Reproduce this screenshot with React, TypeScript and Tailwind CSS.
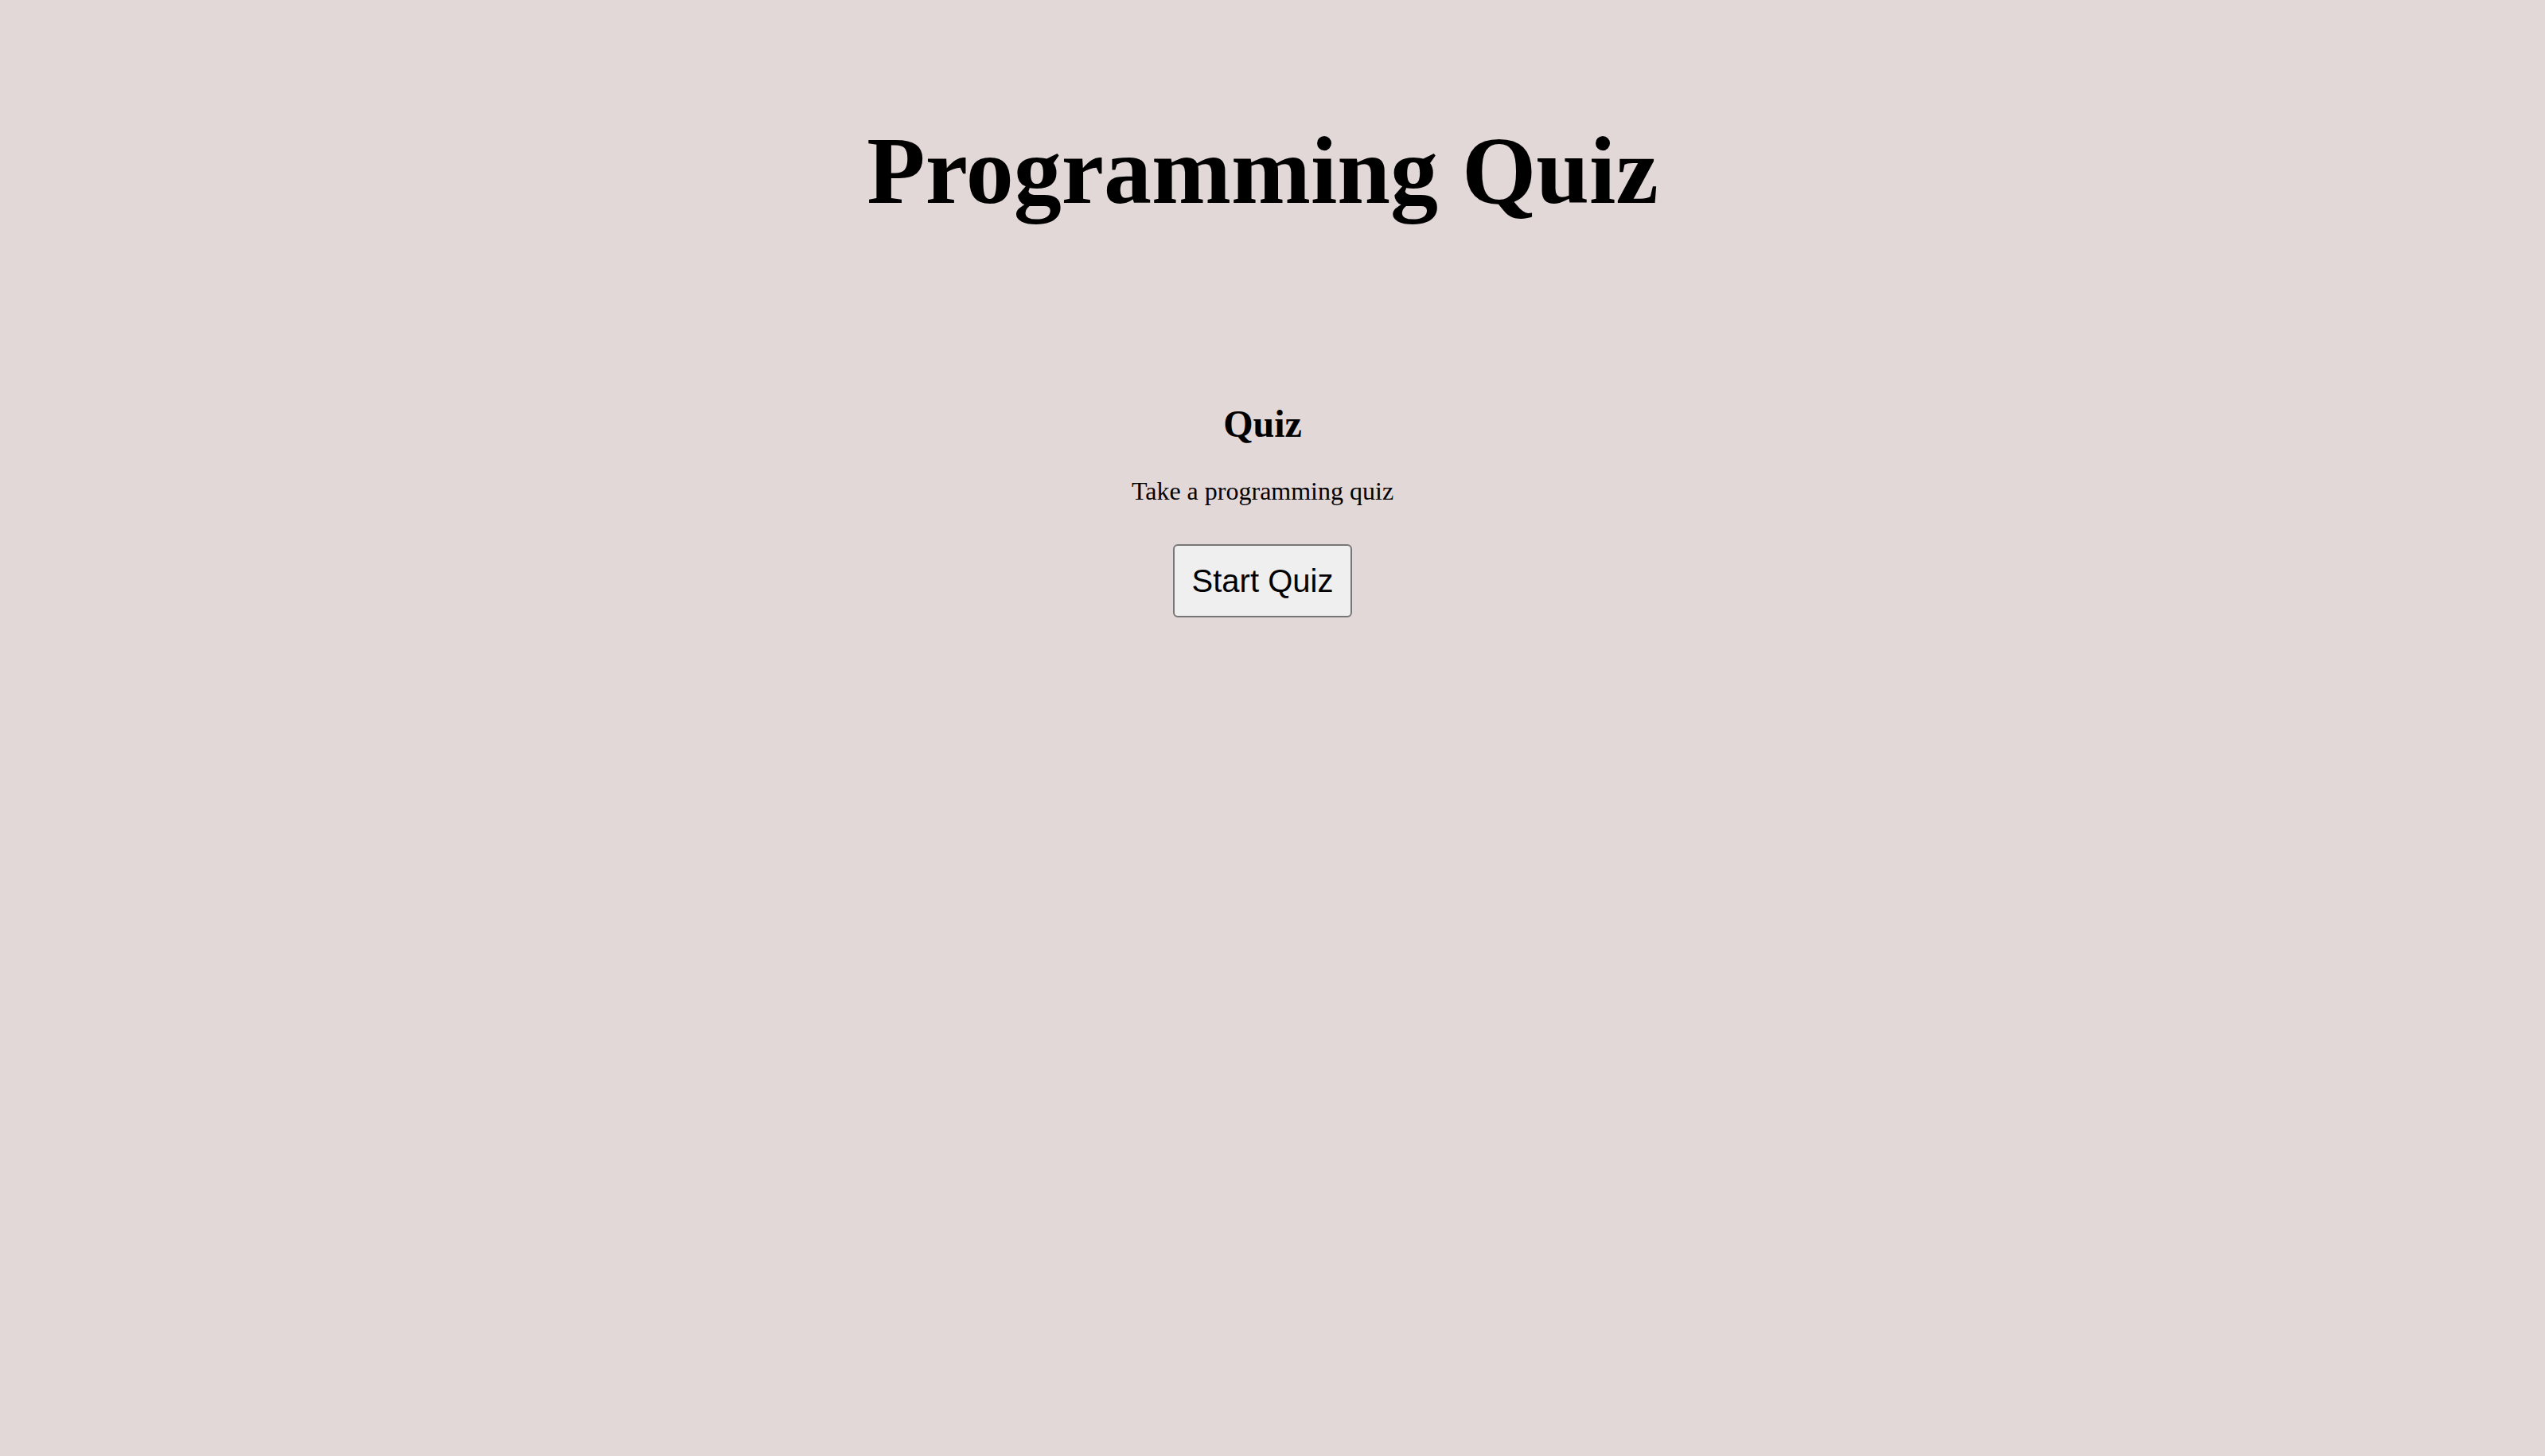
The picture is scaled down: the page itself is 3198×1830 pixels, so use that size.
import React from "react";

export default function App() {
  return (
    <div className="min-h-screen w-full bg-[#e3d8d8] text-black flex flex-col items-center pr-[25px]">
      <h1 className="mt-[155px] text-[120px] leading-[120px] font-bold font-['Liberation_Serif',_'Times_New_Roman',_serif] whitespace-nowrap">
        Programming Quiz
      </h1>
      <h2 className="mt-[234px] text-[48px] leading-[48px] font-bold font-['Liberation_Serif',_'Times_New_Roman',_serif]">
        Quiz
      </h2>
      <p className="mt-[44px] text-[32px] leading-[32px] font-['Liberation_Serif',_'Times_New_Roman',_serif]">
        Take a programming quiz
      </p>
      <button className="mt-[51px] w-[225px] h-[92px] flex items-center justify-center border-2 border-[#767676] rounded-[6px] bg-[#efefef] text-[40px] leading-none font-['Liberation_Sans',_Arial,_sans-serif] text-black">
        Start Quiz
      </button>
    </div>
  );
}
